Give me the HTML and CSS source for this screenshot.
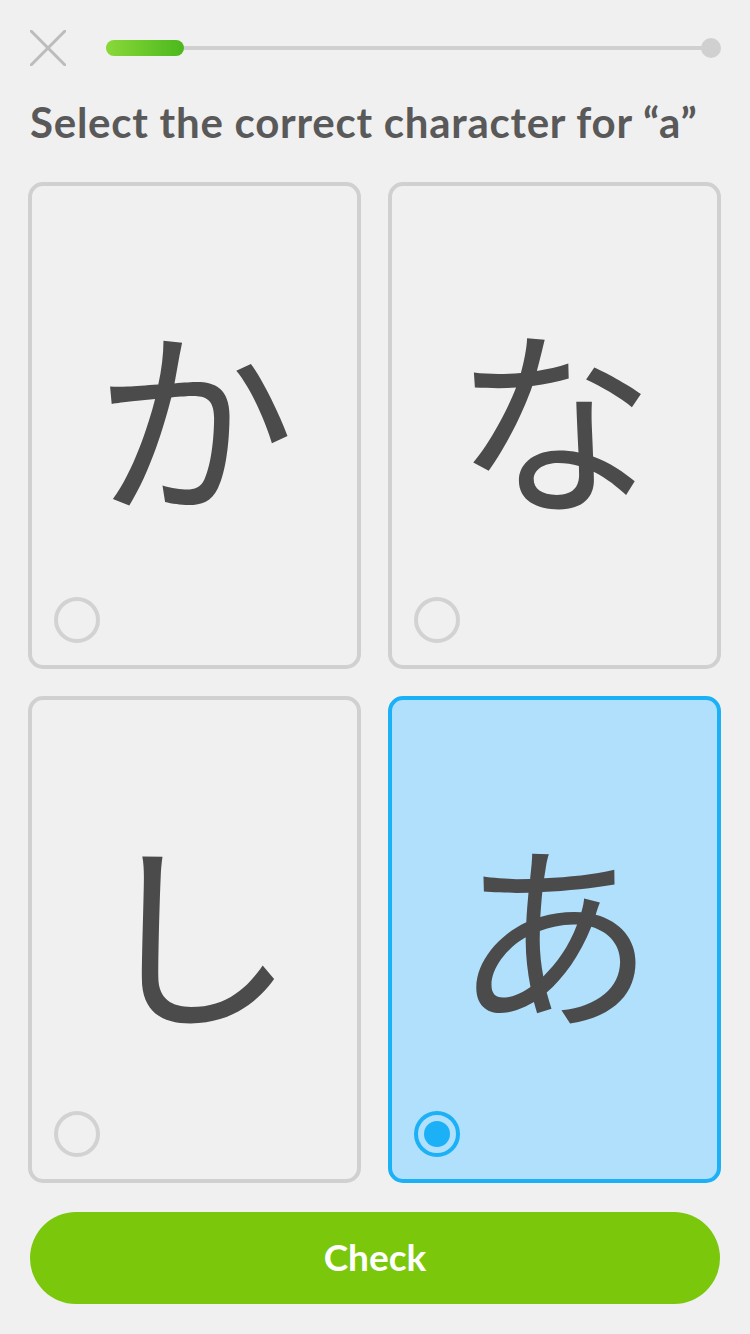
FILE: index.html
```html
<!DOCTYPE html>
<html lang="en">
<head>
    <meta charset="UTF-8">
    <meta name="viewport" content="width=device-width, initial-scale=1.0">
    <title>Select the correct character</title>
    <link rel="stylesheet" href="styles.css">
</head>
<body>
    <div class="header">
        <svg class="close" width="36" height="36" viewBox="0 0 36 36">
            <path d="M1 1 L35 35 M35 1 L1 35" stroke="#bcbcbc" stroke-width="3" stroke-linecap="square" fill="none"/>
        </svg>
        <div class="progress">
            <div class="progress-fill"></div>
            <div class="progress-end"></div>
        </div>
    </div>

    <h1 class="title">Select the correct character for “a”</h1>

    <div class="choices">
        <div class="card">
            <span class="kana">か</span>
            <span class="radio"></span>
        </div>
        <div class="card">
            <span class="kana">な</span>
            <span class="radio"></span>
        </div>
        <div class="card">
            <span class="kana">し</span>
            <span class="radio"></span>
        </div>
        <div class="card selected">
            <span class="kana">あ</span>
            <span class="radio"></span>
        </div>
    </div>

    <button class="check">Check</button>
</body>
</html>
```
FILE: styles.css
```css
* {
    margin: 0;
    padding: 0;
    box-sizing: border-box;
}

body {
    width: 750px;
    height: 1334px;
    background-color: #f0f0f0;
    font-family: Lato, "Open Sans", sans-serif;
    color: #4b4b4b;
    padding: 30px 29px 0 28px;
}

/* 顶部：关闭按钮 + 进度条 */
.header {
    display: flex;
    align-items: center;
    height: 36px;
    padding-left: 2px;
}

.close {
    flex: none;
    display: block;
}

.progress {
    flex: 1;
    margin-left: 40px;
    height: 20px;
    display: flex;
    align-items: center;
    position: relative;
}

.progress::before {
    content: "";
    position: absolute;
    left: 0;
    right: 10px;
    top: 8px;
    height: 4px;
    background-color: #d0d0d0;
}

.progress-fill {
    position: relative;
    width: 78px;
    height: 16px;
    border-radius: 8px;
    background: linear-gradient(to right, #8ad838, #4bb81e);
}

.progress-end {
    position: absolute;
    right: 0;
    top: 0;
    width: 20px;
    height: 20px;
    border-radius: 50%;
    background-color: #d0d0d0;
}

/* 标题 */
.title {
    margin-top: 32px;
    padding-left: 2px;
    font-size: 42px;
    font-weight: 700;
    line-height: 48px;
    color: #595959;
    letter-spacing: 0.75px;
    white-space: nowrap;
}

/* 选项卡片 */
.choices {
    margin-top: 36px;
    display: grid;
    grid-template-columns: 333px 333px;
    grid-template-rows: 487px 487px;
    gap: 27px;
}

.card {
    position: relative;
    border: 4px solid #d0d0d0;
    border-radius: 15px;
    display: flex;
    align-items: center;
    justify-content: center;
}

.kana {
    font-family: "Noto Sans CJK JP", sans-serif;
    font-size: 200px;
    line-height: 1;
    color: #4b4b4b;
    margin-top: -28px;
}

.radio {
    position: absolute;
    left: 22px;
    bottom: 22px;
    width: 46px;
    height: 46px;
    border: 4px solid #d2d2d2;
    border-radius: 50%;
}

.card.selected {
    background-color: #b0e0fc;
    border-color: #1cb0f6;
}

.card.selected .radio {
    border-color: #1cb0f6;
}

.card.selected .radio::after {
    content: "";
    position: absolute;
    left: 6px;
    top: 6px;
    width: 26px;
    height: 26px;
    border-radius: 50%;
    background-color: #1cb0f6;
}

/* 检查按钮 */
.check {
    display: block;
    width: 690px;
    height: 92px;
    margin: 29px 0 0 2px;
    padding-bottom: 4px;
    border: none;
    border-radius: 46px;
    background-color: #7ac70c;
    color: #fff;
    font-family: Lato, "Open Sans", sans-serif;
    font-size: 37px;
    font-weight: 700;
}
```
